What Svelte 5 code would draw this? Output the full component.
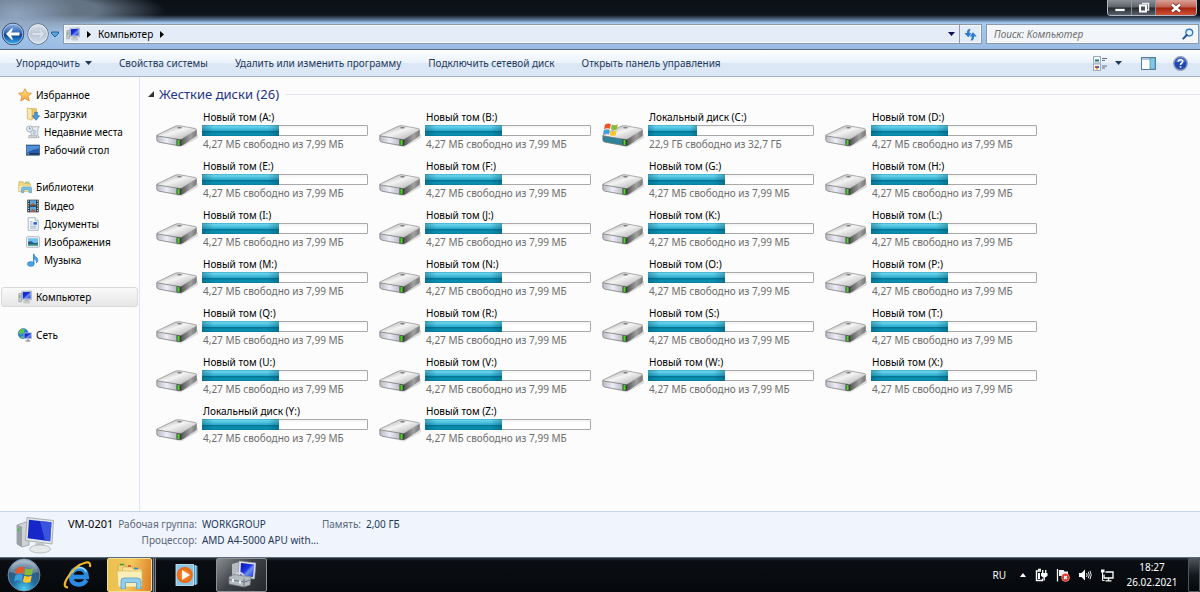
<script>
  const commands = [
    'Свойства системы',
    'Удалить или изменить программу',
    'Подключить сетевой диск',
    'Открыть панель управления'
  ];

  const groups = [
    {
      title: 'Избранное',
      icon: 'star',
      items: [
        { label: 'Загрузки', icon: 'downloads' },
        { label: 'Недавние места', icon: 'recent' },
        { label: 'Рабочий стол', icon: 'desktop' }
      ]
    },
    {
      title: 'Библиотеки',
      icon: 'libraries',
      items: [
        { label: 'Видео', icon: 'video' },
        { label: 'Документы', icon: 'document' },
        { label: 'Изображения', icon: 'pictures' },
        { label: 'Музыка', icon: 'music' }
      ]
    },
    { title: 'Компьютер', icon: 'computer', selected: true, items: [] },
    { title: 'Сеть', icon: 'network', items: [] }
  ];

  const drives = 'ABCDEFGHIJKLMNOPQRSTUVWXYZ'.split('').map((letter) => ({
    letter,
    name: letter === 'C' || letter === 'Y' ? 'Локальный диск' : 'Новый том',
    system: letter === 'C',
    used: letter === 'C' ? 30 : 47,
    free: letter === 'C' ? '22,9 ГБ свободно из 32,7 ГБ' : '4,27 МБ свободно из 7,99 МБ'
  }));

  let search = $state('');
  let expanded = $state(true);
</script>

{#snippet flag()}
  <path d="M1 3 Q4.500 .5 7.500 2.300 L6.500 7.500 Q3.500 6 0 8Z" fill="#e8562a" />
  <path d="M8.500 2.800 Q11.500 4.500 15 2.500 L14 8 Q11 9.500 7.500 8Z" fill="#86bc35" />
  <path d="M-.2 9 Q3 7 6.300 8.600 L5.300 13.600 Q2 12 -1.200 14Z" fill="#3fa0e0" />
  <path d="M7.300 9.200 Q10.500 10.600 13.800 9.200 L12.800 14.300 Q9.500 16 6.300 14.200Z" fill="#fcc62f" />
{/snippet}

{#snippet icon(name)}
  <svg class="icon" viewBox="0 0 16 16" aria-hidden="true">
    {#if name === 'star'}
      <path d="M8 .8 L10.200 5.500 L15.400 6 L11.500 9.500 L12.900 14.900 L8 12 L3.100 14.900 L4.500 9.500 L.6 6 L5.800 5.500Z" fill="url(#gold)" stroke="#e08a35" stroke-width=".9" />
    {:else if name === 'downloads'}
      <path d="M5 2 H12 V13 H6Z" fill="#eccb6a" stroke="#c9a544" stroke-width=".7" />
      <path d="M1.500 1 L7 2.200 V15 L1.500 13.500Z" fill="#f9e9ae" stroke="#c9a544" stroke-width=".7" />
      <path d="M10 6 H13 V10 H15.600 L11.500 15.200 L7.400 10 H10Z" fill="#4a9ae0" stroke="#1e64b0" stroke-width=".7" />
    {:else if name === 'recent'}
      <path d="M4 2 H15 L13.500 5 V12 L15 14 H5 L6 11Z" fill="#eef1f3" stroke="#8d979f" stroke-width=".8" />
      <path d="M7.500 6 H11 M7.500 8 H12 M7.500 10 H11" stroke="#7e9bb5" stroke-width=".9" />
      <circle cx="4" cy="4.500" r="3.500" fill="#e1ebf2" stroke="#94a1ac" stroke-width=".8" />
      <path d="M4 2.500 V4.500 H5.500" stroke="#4d6379" stroke-width=".7" fill="none" />
      <path d="M3 12 L12 11.500 V14.500 L3 14.800Z" fill="#cdd2d6" stroke="#8d979f" stroke-width=".5" />
    {:else if name === 'desktop'}
      <rect x=".7" y="2.300" width="14.600" height="11.600" fill="#245fae" stroke="#203a62" stroke-width=".7" />
      <path d="M1 3 H15 V6 Q8 7 1 11Z" fill="#5090d7" />
      <path d="M1 12.400 H15" stroke="#1c3050" stroke-width="1.600" />
      <circle cx="2.500" cy="12.400" r=".9" fill="#76c5f7" />
    {:else if name === 'libraries'}
      <path d="M1 2 H6 L7 4 H14 V13 H1Z" fill="#f4da84" stroke="#c9a54a" stroke-width=".7" />
      <path d="M8 2.500 H13" stroke="#56af4c" />
      <path d="M1 6 H15 L14 13 H1Z" fill="#fbeeb4" stroke="#d3b35e" stroke-width=".5" />
      <path d="M4 14.500 V9.500 Q4 8 6 8 H13.500 Q15.500 8 15.500 9.500 V14.500 H12.800 V11 H6.700 V14.500Z" fill="#7fc3ea" stroke="#4a93c4" stroke-width=".7" />
    {:else if name === 'video'}
      <rect x="1.500" y=".8" width="13" height="14.400" fill="#253039" />
      <path d="M4.500 1.500 H11.500 V7.200 H4.500Z M4.500 8.800 H11.500 V14.500 H4.500Z" fill="#5aa8de" />
      <path d="M4.500 7.200 L8 4.500 L11.500 7.200Z M4.500 14.500 L8 11 L11.500 14.500Z" fill="#a95e35" />
      <path d="M3 1.800 V15 M13 1.800 V15" stroke="#dce3e8" stroke-width="1.200" stroke-dasharray="1.400 1.300" />
    {:else if name === 'document'}
      <path d="M2.500 .8 H10.500 L14 4.300 V15.200 H2.500Z" fill="#fbfcfe" stroke="#8799ae" stroke-width=".8" />
      <path d="M10.500 .8 V4.300 H14" fill="#dbe5ef" stroke="#8799ae" stroke-width=".6" />
      <path d="M4.500 5.500 H7.500 M4.500 8 H7.500 M4.500 10.500 H12 M4.500 12.700 H12" stroke="#5f88b8" stroke-width=".8" />
      <rect x="8.500" y="5.800" width="4" height="3" fill="#2f65c9" />
    {:else if name === 'pictures'}
      <rect x=".7" y="2" width="14.600" height="12" rx="1" fill="#fafcfd" stroke="#8f9aa5" stroke-width=".8" />
      <rect x="2.300" y="3.700" width="11.400" height="8.600" fill="#6fc0ed" />
      <path d="M2.300 8 Q6 6 8 8.500 Q11 10 13.700 8.500 V12.300 H2.300Z" fill="#235d83" />
      <path d="M2.300 10.800 H13.700 V12.300 H2.300Z" fill="#61b38e" />
    {:else if name === 'music'}
      <path d="M8.500 1 Q9.500 4 12.500 5.500 Q15 8 12 11.500 Q13 8 9.500 7Z" fill="#58aee8" stroke="#2676bd" stroke-width=".8" />
      <ellipse cx="5.500" cy="12.500" rx="3.900" ry="2.700" fill="#4ba5e5" stroke="#2676bd" stroke-width=".7" />
      <path d="M8.800 1 V12.500" stroke="#3b92d7" stroke-width="1.500" />
    {:else if name === 'computer'}
      <path d="M.8 4 L4 3.500 V13.500 L.8 13.500Z" fill="#c6cacf" stroke="#858b91" stroke-width=".5" />
      <path d="M2 6 V9" stroke="#3eb62e" />
      <path d="M4.500 1.500 L15.500 1 V11 L4.500 11.200Z" fill="#d9dee3" stroke="#8d949b" stroke-width=".6" />
      <path d="M5.500 2.500 L14.500 2.100 V9.800 L5.500 10Z" fill="url(#screen)" />
      <path d="M8.500 11 H11.500 L12 13 H8Z" fill="#aab0b6" />
      <ellipse cx="10" cy="13.700" rx="4" ry="1.300" fill="#d0d4d8" stroke="#8d949b" stroke-width=".4" />
    {:else}
      <circle cx="6" cy="6.500" r="5.800" fill="#2a83d6" stroke="#1d5fa8" stroke-width=".5" />
      <path d="M2 2.500 Q5 0 8 1.500 Q6 4 7 6 Q4 5 3.500 8 Q1 7 1 4.500Z M4 9 Q7 9 6 12 Q3.500 12 3 10.500Z" fill="#5dc44c" />
      <path d="M7 6 L15.500 5.300 V12 L7 12.300Z" fill="url(#screen)" stroke="#c3cbd3" stroke-width=".8" />
      <path d="M11.500 12.500 V14.500 M8.500 14.800 H14" stroke="#717b88" stroke-width="1.200" />
    {/if}
  </svg>
{/snippet}

<svg class="defs" aria-hidden="true">
  <defs>
    <linearGradient id="screen" x1="0" y1="0" x2="1" y2="1">
      <stop offset="0" stop-color="#0812a8" />
      <stop offset=".45" stop-color="#1c34e0" />
      <stop offset=".6" stop-color="#6f90f0" />
      <stop offset="1" stop-color="#1a35cf" />
    </linearGradient>
    <linearGradient id="gold" x1="0" y1="0" x2="0" y2="1">
      <stop offset="0" stop-color="#ffe98c" />
      <stop offset="1" stop-color="#f5a336" />
    </linearGradient>
    <linearGradient id="drive-top" x1="0" y1="0" x2="1" y2="1">
      <stop offset="0" stop-color="#909090" />
      <stop offset=".45" stop-color="#f4f4f4" />
      <stop offset=".7" stop-color="#d0d0d0" />
      <stop offset="1" stop-color="#a5a5a5" />
    </linearGradient>
    <linearGradient id="drive-front" x1="0" y1="0" x2="1" y2="0">
      <stop offset="0" stop-color="#b9b9c2" />
      <stop offset=".4" stop-color="#ededf8" />
      <stop offset="1" stop-color="#a5a5ae" />
    </linearGradient>
    <linearGradient id="drive-side" x1="0" y1="0" x2="1" y2="0">
      <stop offset="0" stop-color="#555" />
      <stop offset=".6" stop-color="#a2a2a2" />
      <stop offset="1" stop-color="#777" />
    </linearGradient>
    <linearGradient id="back" x1="0" y1="0" x2="0" y2="1">
      <stop offset="0" stop-color="#8fb5e4" />
      <stop offset=".48" stop-color="#2d62b3" />
      <stop offset=".52" stop-color="#0a3a8f" />
      <stop offset="1" stop-color="#3fb8f5" />
    </linearGradient>
    <linearGradient id="forward" x1="0" y1="0" x2="0" y2="1">
      <stop offset="0" stop-color="#dfe6ee" />
      <stop offset=".5" stop-color="#b9c5d4" />
      <stop offset="1" stop-color="#d9e4f1" />
    </linearGradient>
    <radialGradient id="orb" cx=".5" cy=".95" r=".95">
      <stop offset="0" stop-color="#4fd0f2" />
      <stop offset=".4" stop-color="#1f6b9f" />
      <stop offset=".7" stop-color="#33597b" />
      <stop offset="1" stop-color="#a9bfd0" />
    </radialGradient>
    <radialGradient id="play">
      <stop offset="0" stop-color="#ff9a3c" />
      <stop offset="1" stop-color="#e8630e" />
    </radialGradient>
  </defs>
</svg>

<div class="screen">
  <header class="glass">
    <div class="controls">
      <button aria-label="Свернуть">
        <svg width="12" height="12" viewBox="0 0 12 12"><rect x="1" y="6.500" width="10" height="3" fill="#fff" stroke="#3c4047" stroke-width=".8" /></svg>
      </button>
      <button aria-label="Развернуть">
        <svg width="12" height="12" viewBox="0 0 12 12">
          <path d="M4 1.500 H10.500 V8 H8" fill="none" stroke="#e9ecef" stroke-width="1.500" />
          <rect x="2" y="3.500" width="6" height="6" fill="#4a4f57" stroke="#fff" stroke-width="2" />
        </svg>
      </button>
      <button class="close" aria-label="Закрыть">
        <svg width="12" height="12" viewBox="0 0 12 12">
          <path d="M2 2.500 L10 9.500 M10 2.500 L2 9.500" stroke="#5c2018" stroke-width="4" />
          <path d="M2 2.500 L10 9.500 M10 2.500 L2 9.500" stroke="#fff" stroke-width="2.600" />
        </svg>
      </button>
    </div>

    <div class="navbar">
      <div class="travel">
        <button aria-label="Назад">
          <svg width="24" height="24" viewBox="0 0 24 24">
            <circle cx="12" cy="12" r="10.800" fill="url(#back)" stroke="#3d4d69" />
            <circle cx="12" cy="12" r="9.800" fill="none" stroke="#bdd5f0" stroke-width=".8" />
            <path d="M5 12 L11.500 5.500 V8 L10 10.400 H18.500 V13.600 H10 L11.500 16 V18.500Z" fill="#fff" />
          </svg>
        </button>
        <button aria-label="Вперед">
          <svg width="24" height="24" viewBox="0 0 24 24">
            <circle cx="12" cy="12" r="10.300" fill="url(#forward)" stroke="#66778d" />
            <circle cx="12" cy="12" r="9.300" fill="none" stroke="#eef3f8" stroke-width=".8" />
            <path d="M18.500 12 L12.500 6 V8 L14.300 10.500 H6 V13.500 H14.300 L12.500 16 V18Z" fill="#dae2eb" stroke="#b0bdcc" stroke-width=".5" />
          </svg>
        </button>
        <button aria-label="Последние страницы">
          <svg width="8" height="7" viewBox="0 0 8 7"><path d="M.5 1 H7.500 V2.500 L4 6 L.5 2.500Z" fill="#5aa7dc" stroke="#23527f" stroke-width=".9" /></svg>
        </button>
      </div>

      <div class="address">
        {@render icon('computer')}
        <svg class="crumb-arrow" width="4" height="7" viewBox="0 0 4 7"><path d="M0 0 L4 3.500 L0 7Z" /></svg>
        <button>Компьютер</button>
        <svg class="crumb-arrow" width="4" height="7" viewBox="0 0 4 7"><path d="M0 0 L4 3.500 L0 7Z" /></svg>
        <button class="history" aria-label="Предыдущие расположения">
          <svg width="7" height="4" viewBox="0 0 7 4"><path d="M0 0 H7 L3.500 4Z" fill="#0c0c58" /></svg>
        </button>
        <button class="refresh" aria-label="Обновить">
          <svg width="13" height="13" viewBox="0 0 13 13" fill="#2c7cc9">
            <path d="M6 .8 Q2.800 1.200 3 5 H.3 L4.200 9.200 L7.600 5 H5.500 Q5.200 3 6.500 1.500Z" />
            <path d="M7 12.700 Q10.200 12.300 10 8.500 H12.800 L9 4.300 L5.600 8.500 H7.700 Q8 10.500 6.600 12Z" />
          </svg>
        </button>
      </div>

      <label class="search">
        <input type="text" placeholder="Поиск: Компьютер" aria-label="Поиск: Компьютер" bind:value={search} />
        <svg width="12" height="12" viewBox="0 0 12 12">
          <circle cx="7.300" cy="4.600" r="3.400" fill="#e6f3fd" stroke="#2f7fc4" stroke-width="1.400" />
          <path d="M4.800 7 L1.300 10.600" stroke="#28528f" stroke-width="2" stroke-linecap="round" />
        </svg>
      </label>
    </div>
  </header>

  <div class="toolbar">
    <button>
      Упорядочить
      <svg width="7" height="4" viewBox="0 0 7 4"><path d="M0 0 H7 L3.500 4Z" fill="#1e395b" /></svg>
    </button>
    {#each commands as command}
      <button>{command}</button>
    {/each}
    <div class="tools">
      <button aria-label="Изменить представление">
        <svg width="15" height="15" viewBox="0 0 15 15">
          <rect x=".5" y=".5" width="7" height="6.500" fill="#f4f8fb" stroke="#9eabba" />
          <rect x=".5" y="8" width="7" height="6.500" fill="#f4f8fb" stroke="#9eabba" />
          <path d="M2 4.500 H6" stroke="#23747c" stroke-width="2" />
          <path d="M2 10 H4 V12 H2Z" fill="#d73e33" />
          <path d="M4 10 H6 V12 H4Z" fill="#3c62c8" />
          <path d="M3 12 H5 V13.500 H3Z" fill="#e3a821" />
          <path d="M9 2.500 H14 M9 4.500 H12 M9 10 H14 M9 12 H12" stroke="#586f89" />
        </svg>
      </button>
      <button aria-label="Другие представления">
        <svg width="7" height="4" viewBox="0 0 7 4"><path d="M0 0 H7 L3.500 4Z" fill="#1e395b" /></svg>
      </button>
      <button class="pane" aria-label="Область предпросмотра">
        <svg width="15" height="13" viewBox="0 0 15 13">
          <rect x=".5" y=".5" width="14" height="12" fill="#fbfdff" stroke="#5a7a9a" />
          <path d="M1 2 H14" stroke="#92b3d2" stroke-width="1.500" />
          <rect x="9" y="1" width="5" height="11" fill="#7fcbe6" stroke="#4d86ac" stroke-width=".7" />
        </svg>
      </button>
      <button aria-label="Справка">
        <svg width="15" height="15" viewBox="0 0 15 15">
          <circle cx="7.500" cy="7.500" r="6.700" fill="#2347b2" stroke="#8c9cb8" stroke-width="1.400" />
          <path d="M2.500 6 Q3.500 2.500 7.500 2.300 Q11.500 2.500 12.500 6Z" fill="#6b8be0" opacity=".7" />
          <path d="M5.300 5.800 Q5.300 3.700 7.500 3.700 Q9.700 3.700 9.700 5.600 Q9.700 6.600 8.500 7.300 Q7.500 7.900 7.500 9 M7.500 10.200 V11.800" fill="none" stroke="#fff" stroke-width="1.600" />
        </svg>
      </button>
    </div>
  </div>

  <div class="body">
    <nav class="sidebar">
      {#each groups as group}
        <div class="group">
          <a href="#{group.icon}" class="head" class:selected={group.selected}>
            {@render icon(group.icon)}
            {group.title}
          </a>
          {#each group.items as item}
            <a href="#{item.icon}" class="child">
              {@render icon(item.icon)}
              {item.label}
            </a>
          {/each}
        </div>
      {/each}
    </nav>

    <main>
      <h2>
        <button onclick={() => (expanded = !expanded)} aria-expanded={expanded}>
          <svg width="6" height="6" viewBox="0 0 6 6"><path d="M6 0 V6 H0Z" fill="#333" /></svg>
          Жесткие диски ({drives.length})
        </button>
      </h2>
      {#if expanded}
        <div class="drives">
          {#each drives as drive}
            <a class="drive" href="#{drive.letter}">
              <svg class="drive-icon" viewBox="0 0 42 26" aria-hidden="true">
                <path d="M6 20 L25 24.500 L42 15 V11 L25 20Z" fill="#000" opacity=".12" />
                <path d="M1 12 L19 3.300 Q21 2.400 23.500 2.700 L39.500 5.600 Q41.300 6 40 7.300 L26 16 Q24 17 21.500 16.500 L2 13.500 Q.2 13 1 12Z" fill="url(#drive-top)" stroke="#7a7a7a" stroke-width=".6" />
                <path d="M25 16.400 L40.800 7 V11.500 Q40.800 13 39.500 13.800 L28 21.500 Q26.500 22.500 25 22.700Z" fill="url(#drive-side)" />
                <path d="M.8 12.800 L22.500 16.400 Q25.300 16.800 25.300 18.500 V21 Q25.300 23 23 22.700 L3 19.200 Q.8 18.600 .8 17Z" fill={drive.system ? '#2f8398' : 'url(#drive-front)'} stroke="#777" stroke-width=".7" />
                <path d="M20.500 16.200 L25.500 16.800 V22.800 L20.500 22.200Z" fill="#3a3d40" />
                <path d="M22.500 17 V22" stroke="#4ad41f" stroke-width="2.200" />
                <ellipse cx="23.500" cy="4.800" rx="2.400" ry=".8" fill="#777" />
                {#if drive.system}
                  <g transform="translate(2 -1) scale(.92)">{@render flag()}</g>
                {/if}
              </svg>
              <span class="info">
                <span class="name">{drive.name} ({drive.letter}:)</span>
                <span class="bar"><span class="fill" style="width: {drive.used}%"></span></span>
                <span class="free">{drive.free}</span>
              </span>
            </a>
          {/each}
        </div>
      {/if}
    </main>
  </div>

  <section class="details">
    <svg width="40" height="38" viewBox="0 0 40 38" aria-hidden="true">
      <path d="M1 9 L10 6 L13 8 V29 L6 31 L1 28Z" fill="#cfd3d6" stroke="#8b9095" stroke-width=".7" />
      <path d="M1 9 L6 10.500 V31 L1 28Z" fill="#9aa0a5" />
      <path d="M2.500 12.500 V15" stroke="#39c626" stroke-width="1.700" />
      <path d="M11 1.500 L37.500 4.500 L36 28 L9.500 24.500Z" fill="#e2e5e8" stroke="#999fa5" stroke-width=".8" />
      <path d="M13 3.700 L35.500 6.300 L34.200 25.300 L11.700 22.300Z" fill="#1626c8" />
      <path d="M24 5 L35.500 6.300 L34.200 25.300 L29 24.500Z" fill="#4a6ae6" opacity=".7" />
      <path d="M20 26 L28 27 L29 33 H18Z" fill="#c3c7cb" />
      <ellipse cx="24" cy="33" rx="10.500" ry="4" fill="#e6e8ea" stroke="#a6abaf" stroke-width=".7" />
    </svg>
    <dl>
      <dt class="host">VM-0201</dt>
      <dt>Рабочая группа:</dt>
      <dd>WORKGROUP</dd>
      <dt>Память:</dt>
      <dd>2,00 ГБ</dd>
      <dt class="second">Процессор:</dt>
      <dd>AMD A4-5000 APU with...</dd>
    </dl>
  </section>

  <footer class="taskbar">
    <button class="start" aria-label="Пуск">
      <svg width="34" height="34" viewBox="0 0 34 34">
        <circle cx="17" cy="17" r="16" fill="url(#orb)" stroke="#7f98ab" stroke-width=".8" />
        <path d="M3 14 Q5 3 17 2.500 Q29 3 31 14 Q17 19 3 14Z" fill="#fff" opacity=".25" />
        <g transform="translate(8.500 7) scale(1.180)">{@render flag()}</g>
      </svg>
    </button>
    <button class="task" aria-label="Internet Explorer">
      <svg width="30" height="30" viewBox="0 0 30 30" fill="none">
        <path d="M23.500 20 Q20.500 24.500 15.500 24.500 Q8 24 8 16.500 Q8.500 9 16 8.500 Q23.500 9 23.800 17 H9" stroke="#2a8be0" stroke-width="4.500" />
        <path d="M9 13 Q11 8 16 7.500 Q21 7.500 23.500 12" stroke="#9bddfb" stroke-width="1.300" />
        <path d="M5 27.500 Q-1 27 4 18.500 Q12 5 23 2.500 Q28 1.500 27 7" stroke="#f0b62a" stroke-width="2.200" />
      </svg>
    </button>
    <button class="task explorer" aria-label="Проводник">
      <svg width="30" height="28" viewBox="0 0 30 28">
        <path d="M3 4 H10 L11 6 H20 V24 H3Z" fill="#f2d678" stroke="#c69f3d" stroke-width=".7" />
        <path d="M8 6 H17 L18 8 H27 V25 H4Z" fill="#f9e39a" stroke="#cfa848" stroke-width=".7" />
        <path d="M2 10 H27 V26 H3Z" fill="#fbefb9" stroke="#d9b75b" stroke-width=".7" />
        <path d="M5 3.500 H9" stroke="#38a338" stroke-width="1.600" />
        <path d="M13 5 H16" stroke="#d34a35" stroke-width="1.600" />
        <path d="M19 7.500 H23" stroke="#3187c9" stroke-width="1.600" />
        <path d="M6 28 V20 Q6 17 9 17 H22 Q26 17 26 20 V28 H21.500 V21.500 H10.500 V28Z" fill="#93cdec" stroke="#5c9cc4" stroke-width=".8" />
      </svg>
    </button>
    <span class="stack"></span>
    <button class="task" aria-label="Проигрыватель">
      <svg width="24" height="24" viewBox="0 0 24 24">
        <path d="M6 2 L22 3 V21 L6 22Z" fill="#4f93bc" stroke="#9acbe5" stroke-width=".7" />
        <path d="M20.500 2 V22" stroke="#9acbe5" />
        <rect x="1" y="1.500" width="17.500" height="21" fill="#8cc5e3" stroke="#d1ebf8" stroke-width=".8" />
        <circle cx="9.800" cy="12" r="8" fill="url(#play)" />
        <path d="M7 7 L15 12 L7 17Z" fill="#fff" />
      </svg>
    </button>
    <button class="task active" aria-label="Управление компьютером">
      <svg width="28" height="30" viewBox="0 0 28 30">
        <path d="M4 4 L11 2 V17 L4 18Z" fill="#b6bbc0" />
        <path d="M11 1 L28 3 L26.500 19 L10 17Z" fill="#dfe3e7" stroke="#8e949a" stroke-width=".6" />
        <path d="M13 3 L26.300 4.600 L25 17 L12.200 15.400Z" fill="url(#screen)" />
        <path d="M8 15 Q12 10 16 16" fill="none" stroke="#d2d7db" stroke-width="2" />
        <path d="M1 17 L6 14.500 L23 17 L22 25 L16 27 L1 24Z" fill="#b5bdc3" stroke="#727b82" stroke-width=".7" />
        <path d="M1 19.500 L16 22 L22.500 20 M16 18.500 V27" fill="none" stroke="#6c757c" />
        <path d="M5 19 V22 M12 20.500 V23.500" stroke="#eef1f3" stroke-width="2" />
      </svg>
    </button>

    <div class="tray">
      <button class="lang">RU</button>
      <button aria-label="Отображать скрытые значки">
        <svg width="6" height="4" viewBox="0 0 6 4"><path d="M3 0 L6 4 H0Z" fill="#fff" /></svg>
      </button>
      <button aria-label="Питание">
        <svg width="14" height="14" viewBox="0 0 14 14" fill="none" stroke="#fff">
          <path d="M7 3 H2.500 V12.500 H8.500 V10.500" stroke-width="1.400" />
          <path d="M4 1.500 H7" stroke-width="1.500" />
          <path d="M4 5 H6 V11 H4Z" fill="#fff" stroke="none" />
          <path d="M7 5 H13.500 V7.500 Q12.500 9.500 10.300 9.500 Q8 9.500 7 7.500Z" fill="#fff" stroke="none" />
          <path d="M8.700 5 V2 M11.700 5 V2 M10.200 9 V12.500" stroke-width="1.300" />
        </svg>
      </button>
      <button aria-label="Центр поддержки">
        <svg width="14" height="14" viewBox="0 0 14 14">
          <path d="M1.500 1 V13.500" stroke="#fff" stroke-width="1.300" />
          <path d="M3 2 H7.500 L8.500 3.500 H12 V9 H7.500 L6.500 8 H3Z" fill="#eef0f2" />
          <circle cx="9.500" cy="9.500" r="4" fill="#dc2b25" stroke="#f7b4ae" stroke-width=".6" />
          <path d="M8 8 L11 11 M11 8 L8 11" stroke="#fff" stroke-width="1.400" />
        </svg>
      </button>
      <button aria-label="Громкость">
        <svg width="14" height="14" viewBox="0 0 14 14" fill="none" stroke="#fff">
          <path d="M1 5 H3.500 L7 1.500 V12.500 L3.500 9 H1Z" fill="#fff" stroke="none" />
          <path d="M8.500 5 Q9.800 7 8.500 9 M10.300 3.800 Q12.200 7 10.300 10.200 M12 2.800 Q14.400 7 12 11.200" stroke-width=".9" />
        </svg>
      </button>
      <button aria-label="Сеть">
        <svg width="14" height="14" viewBox="0 0 14 14" fill="none" stroke="#fff">
          <path d="M5.500 4 H13 V10 H4 V6.500" stroke-width="1.300" />
          <path d="M8.500 10 V12.500 M5.500 12.800 H11.500" stroke-width="1.300" />
          <path d="M1 1.500 H4.500 V4.500 H1Z" fill="#fff" stroke="none" />
          <path d="M2.500 4 V12.500 H4.500" />
        </svg>
      </button>
    </div>
    <time datetime="2021-02-26T18:27">
      <span>18:27</span>
      <span>26.02.2021</span>
    </time>
    <button class="show-desktop" aria-label="Свернуть все окна"></button>
  </footer>
</div>

<style>
  :global(body) {
    margin: 0;
    background: #000;
  }

  .screen {
    min-height: 100vh;
    display: flex;
    flex-direction: column;
    font-family: "Noto Sans", "Open Sans", sans-serif;
    font-size: 10px;
    line-height: 16px;
    color: #000;
  }

  .defs {
    position: absolute;
    width: 0;
    height: 0;
  }

  button,
  input {
    font: inherit;
    color: inherit;
    padding: 0;
    margin: 0;
    border: none;
    background: none;
  }

  button {
    display: flex;
    align-items: center;
    justify-content: center;
    white-space: nowrap;
  }

  a {
    color: inherit;
    text-decoration: none;
  }

  svg {
    display: block;
    flex: none;
  }

  .icon {
    width: 14px;
    height: 14px;
  }

  .glass {
    border-bottom: 1px solid #55657b;
    background:
      radial-gradient(ellipse 60px 26px at 16px 14px, rgba(160, 185, 215, 0.7), transparent),
      radial-gradient(ellipse 165px 26px at 0 10px, rgba(130, 148, 168, 0.75) 60%, transparent),
      linear-gradient(#0b1017 0, #0e141c 15px, #5c7898 20px, #a9c9ee 23px, #9abce4 100%);
  }

  .controls {
    display: flex;
    width: 88px;
    height: 15px;
    margin: 0 3px 0 auto;
    border: 1px solid #b3bac4;
    border-top: none;
    border-radius: 0 0 4px 4px;
    overflow: hidden;
  }

  .controls button {
    width: 24px;
    border-right: 1px solid #8b929c;
    background: linear-gradient(#8c9096, #5c6068 48%, #23262c 52%, #5b626c);
  }

  .controls .close {
    flex: 1;
    border-right: none;
    background: linear-gradient(#d9a198, #c1604f 48%, #a4210c 52%, #d0533a);
  }

  .navbar {
    display: flex;
    align-items: center;
    gap: 4px;
    padding: 6px 1px 3px;
  }

  .travel {
    display: flex;
    align-items: center;
    gap: 1px;
  }

  .address,
  .search {
    display: flex;
    align-items: center;
    box-sizing: border-box;
    height: 20px;
    border: 1px solid #8b9aad;
    background: #e4ecf7;
    box-shadow: inset 0 0 0 1px #f6f9fd;
  }

  .address {
    flex: 1;
    gap: 7px;
    padding-left: 2px;
  }

  .crumb-arrow {
    fill: #000;
  }

  .history {
    width: 14px;
    margin-left: auto;
  }

  .refresh {
    align-self: stretch;
    width: 22px;
    margin-left: -6px;
    border-left: 1px solid #8b9aad;
  }

  .search {
    flex: 0 1 213px;
    padding: 0 4px 0 7px;
    background: #f2f6fb;
  }

  .search input {
    flex: 1;
    min-width: 0;
    outline: none;
  }

  .search input::placeholder {
    color: #6d6d6d;
    font-style: italic;
    opacity: 1;
  }

  .toolbar {
    display: flex;
    align-items: center;
    gap: 27px;
    height: 27px;
    padding: 0 12px 0 16px;
    border-bottom: 1px solid #a0b4cc;
    background: linear-gradient(#fdfeff, #eaf2fb 50%, #dce7f5 52%, #dce8f6);
    box-sizing: border-box;
    color: #1e395b;
  }

  .toolbar button {
    gap: 5px;
  }

  .tools {
    display: flex;
    gap: 7px;
    margin-left: auto;
  }

  .tools .pane {
    margin: 0 10px 0 12px;
  }

  .body {
    flex: 1;
    display: flex;
    background: #fcfcfc;
  }

  .sidebar {
    display: flex;
    flex-direction: column;
    gap: 18px;
    box-sizing: border-box;
    width: 140px;
    flex: none;
    padding: 8px 1px 0 0;
    border-right: 1px solid #d9e5f2;
  }

  .group {
    display: flex;
    flex-direction: column;
  }

  .head,
  .child {
    display: flex;
    align-items: center;
    gap: 4px;
    height: 18px;
    padding-left: 26px;
  }

  .head {
    box-sizing: border-box;
    height: 20px;
    margin-left: 1px;
    padding-left: 16px;
    border: 1px solid transparent;
    border-radius: 3px;
  }

  .head.selected {
    border-color: #d9d9d9;
    background: linear-gradient(#fafafa, #e6e6e6);
  }

  main {
    flex: 1;
    padding: 7px 0 0 8px;
  }

  h2 {
    display: flex;
    align-items: center;
    gap: 6px;
    margin: 0;
    font-size: 13px;
    font-weight: normal;
    line-height: 20px;
    color: #1e3287;
  }

  h2 button {
    gap: 5px;
  }

  h2::after {
    content: "";
    flex: 1;
    border-top: 1px solid #e3e6ec;
  }

  .drives {
    display: grid;
    grid-template-columns: repeat(auto-fill, 223px);
    row-gap: 6px;
    padding: 5px 0 0 8px;
  }

  .drive {
    display: flex;
    align-items: center;
    gap: 4px;
  }

  .drive-icon {
    width: 42px;
    height: 26px;
    margin-top: 10px;
  }

  .info {
    display: flex;
    flex-direction: column;
    width: 166px;
    white-space: nowrap;
  }

  .name,
  .free {
    padding-left: 1px;
  }

  .bar {
    display: flex;
    box-sizing: border-box;
    height: 11px;
    border: 1px solid #a9a9a9;
    border-radius: 1px;
    background: linear-gradient(#f3f3f3, #fff 40%);
  }

  .fill {
    margin: -1px 0 -1px -1px;
    background:
      linear-gradient(90deg, rgba(0, 70, 95, 0.35), transparent 15% 85%, rgba(0, 70, 95, 0.35)),
      linear-gradient(#3fb0cd, #6ad3ea 15%, #2cacce 50%, #05708f 55%, #0b93b4 80%, #0a7f9f);
  }

  .free {
    color: #6d6d6d;
  }

  .details {
    display: flex;
    gap: 12px;
    padding: 4px 16px 3px;
    border-top: 1px solid #c3d5e8;
    background: #f0f4fc;
  }

  dl {
    display: grid;
    grid-template-columns: auto auto 115px auto auto;
    align-content: start;
    column-gap: 5px;
    margin: 0;
    white-space: nowrap;
  }

  dt {
    color: #5a6779;
    text-align: right;
  }

  dt.host {
    font-size: 11px;
    color: #000;
  }

  dt.second {
    grid-column: 2;
  }

  dd {
    margin: 0;
    color: #1e395b;
  }

  .taskbar {
    display: flex;
    align-items: stretch;
    height: 35px;
    border-top: 1px solid #5d6c7c;
    box-sizing: border-box;
    background: linear-gradient(#2a333c, #0a0d12 3px, #06090c);
    color: #fff;
  }

  .start {
    width: 48px;
  }

  .task {
    box-sizing: border-box;
    width: 51px;
    margin-right: 4px;
    border: 1px solid transparent;
    border-radius: 2px;
  }

  .start + .task {
    margin-left: 4px;
  }

  .task.explorer {
    width: 45px;
    margin: 0;
    border-color: #f6dd94;
    background: linear-gradient(100deg, #e9c050, #f3c75a 50%, #dd7d24);
  }

  .stack {
    width: 1px;
    margin-right: 5px;
    border-right: 3px double #7c8288;
    background: #30363c;
  }

  .task.active {
    border-color: #8d9195;
    background: linear-gradient(135deg, #8a8d90, #3f4347 45%, #24282b);
  }

  .tray {
    display: flex;
    align-items: center;
    gap: 8px;
    margin: 0 2px 0 auto;
  }

  .lang {
    margin-right: 6px;
  }

  time {
    display: flex;
    flex-direction: column;
    justify-content: center;
    width: 72px;
    text-align: center;
    line-height: 15px;
  }

  .show-desktop {
    width: 12px;
    border: 1px solid #4e565e;
    border-radius: 1px;
    background: linear-gradient(#4c535a, #14181c 50%, #060809);
  }
</style>
